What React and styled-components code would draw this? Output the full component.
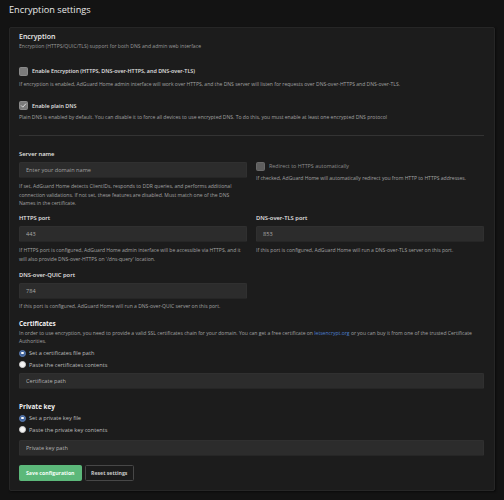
import React from "react";
import styled, { createGlobalStyle } from "styled-components";

const Global = createGlobalStyle`
  html, body { margin: 0; padding: 0; background: #131313; }
  body { font-family: "Open Sans", "Noto Sans", sans-serif; color: #e4e4e4; }
  * { box-sizing: border-box; }
`;

const Page = styled.div`
  padding: 4px 9px 8px 9px;
  width: 504px;
`;

const Title = styled.h1`
  margin: 0;
  font-size: 9.2px;
  line-height: 12px;
  font-weight: 400;
  color: #e8e8e8;
`;

const Card = styled.section`
  margin-top: 11px;
  background: #1c1c1c;
  border: 1px solid #262626;
  border-radius: 2px;
  box-shadow: 1px 1px 2px rgba(0, 0, 0, 0.5);
  padding: 4px 10px 9px 9px;
`;

const Heading = styled.h2`
  margin: 0;
  font-size: 7px;
  line-height: 10px;
  font-weight: 600;
  color: #ececec;
`;

const SubTitle = styled.div`
  font-size: 5.1px;
  line-height: 8px;
  color: #9a9a9a;
`;

const CheckRow = styled.label`
  display: flex;
  align-items: center;
  gap: 4px;
  height: 10px;
  margin-top: ${(p) => p.$mt || 0}px;
  font-size: 5.4px;
  color: ${(p) => (p.$muted ? "#8c8c8c" : "#e2e2e2")};
  font-weight: ${(p) => (p.$muted ? 400 : 600)};
`;

const Box = styled.span`
  width: 9px;
  height: 9px;
  border-radius: 1.5px;
  background: ${(p) => (p.$dim ? "#5e5e5e" : "#7b7b7b")};
  border: 1px solid ${(p) => (p.$dim ? "#6a6a6a" : "#8a8a8a")};
  display: flex;
  align-items: center;
  justify-content: center;
  flex: none;
`;

const Help = styled.div`
  margin-top: ${(p) => p.$mt || 0}px;
  font-size: 5.05px;
  line-height: 8.5px;
  color: #a2a2a2;
`;

const Divider = styled.hr`
  margin: 13.5px 0 0 0;
  border: 0;
  border-top: 1px solid #333;
`;

const Grid = styled.div`
  display: grid;
  grid-template-columns: 228px 228px;
  column-gap: 9px;
  margin-top: 14px;
  row-gap: 6.5px;
`;

const Group = styled.div`
  display: flex;
  flex-direction: column;
  padding-top: ${(p) => p.$pt || 0}px;
`;

const Label = styled.div`
  font-size: 5.8px;
  line-height: 8px;
  font-weight: 600;
  color: #e6e6e6;
`;

const Input = styled.input`
  display: block;
  margin: ${(p) => p.$mt ?? 3.5}px 0 0 0;
  height: 16px;
  width: 100%;
  background: #2c2c2c;
  border: 1px solid #303030;
  border-bottom-color: #262626;
  border-radius: 1.5px;
  padding: 0 6px;
  font-family: inherit;
  font-size: 5.6px;
  color: ${(p) => (p.$bright ? "#b8b8b8" : "#a8a8a8")};
  outline: none;
  &::placeholder { color: ${(p) => (p.$bright ? "#b4b4b4" : "#a0a0a0")}; }
`;

const SectionTitle = styled.div`
  margin-top: ${(p) => p.$mt || 0}px;
  font-size: 6.4px;
  line-height: 9px;
  font-weight: 700;
  color: #f0f0f0;
`;

const Link = styled.a`
  color: #4d80d0;
  text-decoration: none;
`;

const RadioList = styled.div`
  margin-top: ${(p) => p.$mt || 0}px;
  display: flex;
  flex-direction: column;
`;

const RadioRow = styled.label`
  display: flex;
  align-items: center;
  gap: 3px;
  height: 11.5px;
  font-size: 5.6px;
  line-height: 8px;
  color: #bdbdbd;
`;

const Dot = styled.span`
  width: 7px;
  height: 7px;
  border-radius: 50%;
  flex: none;
  background: ${(p) => (p.$on ? "#41649c" : "#f4f4f4")};
  border: 1px solid ${(p) => (p.$on ? "#5a7bb0" : "#d0d0d0")};
  display: flex;
  align-items: center;
  justify-content: center;
  &::after {
    content: "";
    width: 2.5px;
    height: 2.5px;
    border-radius: 50%;
    background: ${(p) => (p.$on ? "#fff" : "transparent")};
  }
`;

const Buttons = styled.div`
  display: flex;
  gap: 3px;
  margin-top: 9px;
`;

const Button = styled.button`
  height: 16px;
  padding: 0 ${(p) => (p.$primary ? 6 : 5.5)}px;
  border-radius: 1.5px;
  font-family: inherit;
  font-size: 5.2px;
  font-weight: 700;
  background: ${(p) => (p.$primary ? "#5cb87a" : "#1b1b1b")};
  border: 1px solid ${(p) => (p.$primary ? "#5cb87a" : "#474747")};
  color: ${(p) => (p.$primary ? "#f4fff6" : "#c8c8c8")};
`;

const Check = () => (
  <svg width="7" height="7" viewBox="0 0 8 8">
    <path d="M1.5 4.2 L3.2 5.9 L6.5 2.2" fill="none" stroke="#e8e8e8" strokeWidth="1" strokeLinecap="round" strokeLinejoin="round" />
  </svg>
);

export default function App() {
  return (
    <>
      <Global />
      <Page>
        <Title>Encryption settings</Title>
        <Card>
          <Heading>Encryption</Heading>
          <SubTitle>Encryption (HTTPS/QUIC/TLS) support for both DNS and admin web interface</SubTitle>

          <CheckRow $mt={16}>
            <Box />
            Enable Encryption (HTTPS, DNS-over-HTTPS, and DNS-over-TLS)
          </CheckRow>
          <Help $mt={4}>
            If encryption is enabled, AdGuard Home admin interface will work over HTTPS, and the DNS server will listen for requests over DNS-over-HTTPS and DNS-over-TLS.
          </Help>

          <CheckRow $mt={12}>
            <Box>
              <Check />
            </Box>
            Enable plain DNS
          </CheckRow>
          <Help $mt={2.5}>
            Plain DNS is enabled by default. You can disable it to force all devices to use encrypted DNS. To do this, you must enable at least one encrypted DNS protocol
          </Help>

          <Divider />

          <Grid>
            <Group>
              <Label>Server name</Label>
              <Input placeholder="Enter your domain name" />
              <Help $mt={4.5}>
                If set, AdGuard Home detects ClientIDs, responds to DDR queries, and performs additional connection validations. If not set, these features are disabled. Must match one of the DNS Names in the certificate.
              </Help>
            </Group>
            <Group $pt={11}>
              <CheckRow $muted>
                <Box $dim />
                Redirect to HTTPS automatically
              </CheckRow>
              <Help $mt={2.5}>If checked, AdGuard Home will automatically redirect you from HTTP to HTTPS addresses.</Help>
            </Group>

            <Group>
              <Label>HTTPS port</Label>
              <Input defaultValue="443" />
              <Help $mt={4.5}>
                If HTTPS port is configured, AdGuard Home admin interface will be accessible via HTTPS, and it will also provide DNS-over-HTTPS on '/dns-query' location.
              </Help>
            </Group>
            <Group>
              <Label>DNS-over-TLS port</Label>
              <Input defaultValue="853" />
              <Help $mt={4.5}>If this port is configured, AdGuard Home will run a DNS-over-TLS server on this port.</Help>
            </Group>

            <Group $pt={1.5}>
              <Label>DNS-over-QUIC port</Label>
              <Input defaultValue="784" />
              <Help $mt={3.5}>If this port is configured, AdGuard Home will run a DNS-over-QUIC server on this port.</Help>
            </Group>
          </Grid>

          <SectionTitle $mt={8}>Certificates</SectionTitle>
          <Help $mt={1}>
            In order to use encryption, you need to provide a valid SSL certificates chain for your domain. You can get a free certificate on{" "}
            <Link href="#">letsencrypt.org</Link> or you can buy it from one of the trusted Certificate Authorities.
          </Help>
          <RadioList $mt={1.75}>
            <RadioRow>
              <Dot $on />
              Set a certificates file path
            </RadioRow>
            <RadioRow>
              <Dot />
              Paste the certificates contents
            </RadioRow>
          </RadioList>
          <Input $bright $mt={3} placeholder="Certificate path" />

          <SectionTitle $mt={12.5}>Private key</SectionTitle>
          <RadioList $mt={1.5}>
            <RadioRow>
              <Dot $on />
              Set a private key file
            </RadioRow>
            <RadioRow>
              <Dot />
              Paste the private key contents
            </RadioRow>
          </RadioList>
          <Input $bright $mt={4.75} placeholder="Private key path" />

          <Buttons>
            <Button $primary>Save configuration</Button>
            <Button>Reset settings</Button>
          </Buttons>
        </Card>
      </Page>
    </>
  );
}
